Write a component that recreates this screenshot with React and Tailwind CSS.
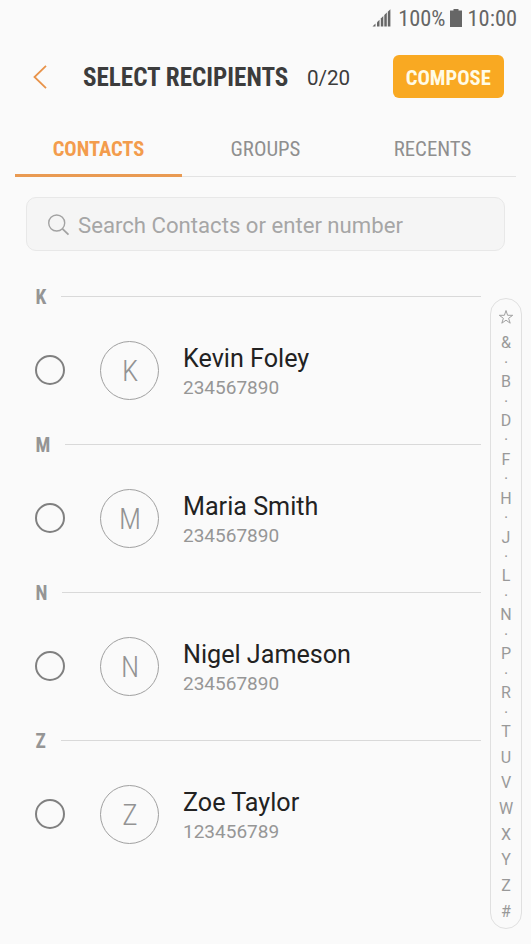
import React from 'react';

const contacts = [
  { id: 1, letter: 'K', name: 'Kevin Foley', phone: '234567890' },
  { id: 2, letter: 'M', name: 'Maria Smith', phone: '234567890' },
  { id: 3, letter: 'N', name: 'Nigel Jameson', phone: '234567890' },
  { id: 4, letter: 'Z', name: 'Zoe Taylor', phone: '123456789' }
];

const indexItems = [
  '&', '·', 'B', '·', 'D', '·', 'F', '·', 'H', '·', 'J', '·', 'L', '·', 'N', '·', 'P', '·', 'R', '·',
  'T', 'U', 'V', 'W', 'X', 'Y', 'Z', '#'
];

const StatusBar = () => {
  return (
    <div className="flex h-[37px] items-center justify-end pr-[14px] text-[#666666]">
      <svg className="mr-[7px] mb-px h-[18px] w-[19px]" viewBox="0 0 19 18" fill="currentColor">
        <path d="M0.5 17.5 L3.5 14.5 V17.5 Z" />
        <path d="M5 13.3 L7.5 10.8 V17.5 H5 Z" />
        <path d="M8.8 9.5 L11.3 7 V17.5 H8.8 Z" />
        <path d="M12.3 6 L14.8 3.6 V17.5 H12.3 Z" />
        <path d="M15.8 2.7 L18.4 0.2 V17.5 H15.8 Z" />
      </svg>
      <span className="font-['Roboto_Condensed',Roboto,sans-serif] text-[22.4px] leading-none font-stretch-condensed">100%</span>
      <svg className="mr-[6px] mb-px ml-[4px] h-[18px] w-[12px]" viewBox="0 0 12 18" fill="currentColor">
        <path d="M3.5 0 H8.5 V1.5 H12 V18 H0 V1.5 H3.5 Z" />
      </svg>
      <span className="font-['Roboto_Condensed',Roboto,sans-serif] text-[22.4px] leading-none font-stretch-condensed">10:00</span>
    </div>
  );
};

const Header = () => {
  return (
    <header className="flex h-[80px] items-center pr-[27px] pl-[33px]">
      <svg className="h-[24px] w-[14px]" viewBox="0 0 14 24" fill="none" stroke="#e8934a" strokeWidth="1.8">
        <path d="M13 0.8 L1.5 12 L13 23.2" />
      </svg>
      <h1 className="ml-[36px] pt-[2px] font-['Roboto_Condensed',Roboto,sans-serif] text-[25.1px] leading-none font-bold whitespace-nowrap text-[#3c3c3c] font-stretch-condensed">
        SELECT RECIPIENTS
      </h1>
      <span className="ml-[18.5px] pt-[2px] text-[20.6px] leading-none text-[#3c3c3c]">0/20</span>
      <button className="mb-px ml-auto flex h-[43px] w-[111.5px] items-center justify-center rounded-[6px] bg-[#f9a922] pt-[3px] font-['Roboto_Condensed',Roboto,sans-serif] text-[20.6px] leading-none font-bold text-[#fffbe6] font-stretch-condensed">
        COMPOSE
      </button>
    </header>
  );
};

const Tabs = () => {
  return (
    <nav className="mx-[15px] grid h-[60px] grid-cols-3 font-['Roboto_Condensed',Roboto,sans-serif] text-[20.8px] leading-none text-[#8f8f8f] font-stretch-condensed">
      <div className="flex items-center justify-center border-b-3 border-[#e99a52] pt-[8px] text-[20.5px] font-bold text-[#f39c4c]">CONTACTS</div>
      <div className="flex items-center justify-center border-b border-[#e3e3e3] pt-[6px]">GROUPS</div>
      <div className="flex items-center justify-center border-b border-[#e3e3e3] pt-[6px]">RECENTS</div>
    </nav>
  );
};

const SearchBox = () => {
  return (
    <div className="mt-[20px] mr-[26px] ml-[26px] flex h-[54px] items-center rounded-[10px] border border-[#e8e8e8] bg-[#f5f5f5] pl-[21px]">
      <svg className="mt-px h-[22px] w-[22px]" viewBox="0 0 22 22" fill="none" stroke="#a3a3a3" strokeWidth="1.4">
        <circle cx="8.7" cy="9" r="8" />
        <path d="M14.5 14.8 L20.5 20.6" strokeWidth="1.8" />
      </svg>
      <span className="ml-[8px] pt-[2px] text-[22.15px] leading-none text-[#a6a6a6]">Search Contacts or enter number</span>
    </div>
  );
};

const ContactSection = ({ contact }) => {
  return (
    <section className="h-[148px]">
      <div className="flex h-[20px] items-center">
        <span className="pt-[3px] pl-[0.5px] font-['Roboto_Condensed',Roboto,sans-serif] text-[19.5px] leading-none font-bold text-[#959595] font-stretch-condensed">
          {contact.letter}
        </span>
        <span className="ml-[15px] h-px flex-1 bg-[#d9d9d9]"></span>
      </div>
      <div className="flex h-[128px] items-center">
        <span className="mb-px h-[30px] w-[30px] rounded-full border-2 border-[#808080]"></span>
        <span className="ml-[35px] flex h-[59px] w-[59px] items-center justify-center rounded-full border border-[#a0a0a0] text-[29.5px] leading-none font-light text-[#939393]">
          <span className="pt-[4px] pl-px font-['Roboto_Condensed',Roboto,sans-serif] font-stretch-condensed">{contact.letter}</span>
        </span>
        <div className="ml-[24px] pt-[6px]">
          <p className="text-[25.15px] leading-[30px] text-[#222222]">{contact.name}</p>
          <p className="text-[19px] leading-[28px] text-[#969696]">{contact.phone}</p>
        </div>
      </div>
    </section>
  );
};

const IndexBar = () => {
  return (
    <aside className="mt-[12px] flex h-[631px] w-[32px] flex-col items-center rounded-full border border-[#e0e0e0] pt-[5.2px] text-[16px] text-[#999999]">
      <span className="flex h-[25.7px] items-center">
        <svg className="h-[16px] w-[16px]" viewBox="0 0 16 16" fill="none" stroke="#a0a0a0" strokeWidth="1">
          <path d="M8 1.5 L9.6 6.3 H14.7 L10.6 9.3 L12.2 14.2 L8 11.2 L3.8 14.2 L5.4 9.3 L1.3 6.3 H6.4 Z" />
        </svg>
      </span>
      {indexItems.map((item, index) =>
        item === '·' ? (
          <span key={index} className="flex h-[13.2px] items-center pt-px leading-none">{item}</span>
        ) : (
          <span key={index} className="flex h-[25.7px] items-center pt-px leading-none">{item}</span>
        )
      )}
    </aside>
  );
};

export default function App() {
  return (
    <div className="h-[944px] w-[531px] overflow-hidden bg-[#fafafa] font-[Roboto,sans-serif]">
      <StatusBar />
      <Header />
      <Tabs />
      <SearchBox />
      <main className="mt-[35px] flex pr-[9px] pl-[35px]">
        {/* Contact list grouped by first letter */}
        <div className="mr-[9px] flex-1">
          {contacts.map((contact) => (
            <ContactSection key={contact.id} contact={contact} />
          ))}
        </div>
        <IndexBar />
      </main>
    </div>
  );
}
